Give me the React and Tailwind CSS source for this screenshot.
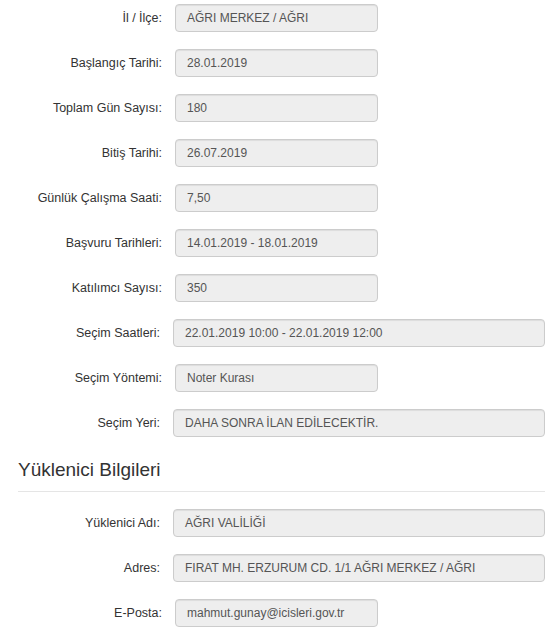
import React from "react";

const rows1 = [
  ["İl / İlçe:", "AĞRI MERKEZ / AĞRI", false],
  ["Başlangıç Tarihi:", "28.01.2019", false],
  ["Toplam Gün Sayısı:", "180", false],
  ["Bitiş Tarihi:", "26.07.2019", false],
  ["Günlük Çalışma Saati:", "7,50", false],
  ["Başvuru Tarihleri:", "14.01.2019 - 18.01.2019", false],
  ["Katılımcı Sayısı:", "350", false],
  ["Seçim Saatleri:", "22.01.2019 10:00 - 22.01.2019 12:00", true],
  ["Seçim Yöntemi:", "Noter Kurası", false],
  ["Seçim Yeri:", "DAHA SONRA İLAN EDİLECEKTİR.", true],
];

const rows2 = [
  ["Yüklenici Adı:", "AĞRI VALİLİĞİ", true],
  ["Adres:", "FIRAT MH. ERZURUM CD. 1/1 AĞRI MERKEZ / AĞRI", true],
  ["E-Posta:", "mahmut.gunay@icisleri.gov.tr", false],
];

function Row({ label, value, wide }) {
  return (
    <div className="flex items-center h-[28px] mb-[17px]">
      <div className="w-[163px] text-right text-[12.5px] text-[#333] pr-[1px]">{label}</div>
      <div className="ml-[12px] h-[28px]">
        <div
          className={
            (wide ? "w-[372px] " : "w-[203px] ") +
            "h-[28px] bg-[#eeeeee] border border-[#cccccc] rounded-[4px] shadow-[inset_0_1px_1px_rgba(0,0,0,0.075)] px-[11px] flex items-center text-[12px] text-[#555] whitespace-nowrap"
          }
        >
          {value}
        </div>
      </div>
    </div>
  );
}

export default function App() {
  return (
    <div className="w-[545px] h-[630px] overflow-hidden bg-white [font-family:'Liberation_Sans',Arial,sans-serif]">
      <div className="pt-[4px]">
        {rows1.map(([l, v, w]) => (
          <Row key={l} label={l} value={v} wide={w} />
        ))}
      </div>
      <div className="pl-[18px] pt-[5px]">
        <div className="text-[19px] text-[#333] leading-[22px]">Yüklenici Bilgileri</div>
        <div className="mt-[10px] border-t border-[#e5e5e5]"></div>
      </div>
      <div className="pt-[17px]">
        {rows2.map(([l, v, w]) => (
          <Row key={l} label={l} value={v} wide={w} />
        ))}
      </div>
    </div>
  );
}
